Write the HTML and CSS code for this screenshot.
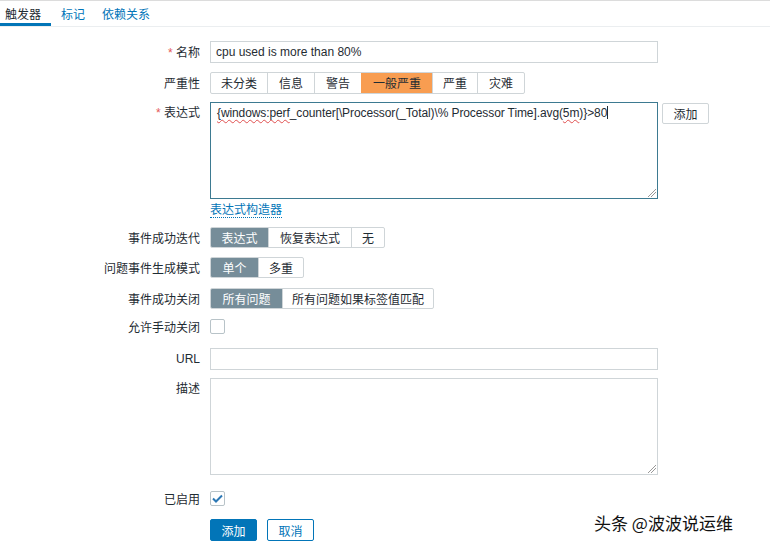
FILE: index.html
```html
<!DOCTYPE html>
<html>
<head>
<meta charset="utf-8">
<link rel="stylesheet" href="styles.css">
</head>
<body>
<div class="page">
  <div class="tabs">
    <span class="tab active">触发器</span>
    <span class="tab">标记</span>
    <span class="tab">依赖关系</span>
  </div>
  <div class="form">
    <div class="row r-name">
      <label class="lbl"><span class="req">*</span> 名称</label>
      <div class="input wide">cpu used is more than 80%</div>
    </div>
    <div class="row r-sev">
      <label class="lbl">严重性</label>
      <div class="seg">
        <span class="opt w57">未分类</span>
        <span class="opt w47">信息</span>
        <span class="opt w47">警告</span>
        <span class="opt w71 orange">一般严重</span>
        <span class="opt w45">严重</span>
        <span class="opt w47">灾难</span>
      </div>
    </div>
    <div class="row r-expr top">
      <label class="lbl lbl-top"><span class="req">*</span> 表达式</label>
      <div class="textarea wide focus"><span class="sp">{windows:perf</span>_counter[\Processor(_Total)\% Processor Time].avg(<span class="sp">5m</span>)}&gt;80<span class="caret"></span><span class="grip"></span></div>
      <span class="btn small">添加</span>
    </div>
    <div class="row r-link">
      <span class="lbl"></span>
      <a class="link">表达式构造器</a>
    </div>
    <div class="row r-it">
      <label class="lbl">事件成功迭代</label>
      <div class="seg">
        <span class="opt w58 sel">表达式</span>
        <span class="opt w83">恢复表达式</span>
        <span class="opt w33">无</span>
      </div>
    </div>
    <div class="row r-mode">
      <label class="lbl">问题事件生成模式</label>
      <div class="seg">
        <span class="opt w47 sel">单个</span>
        <span class="opt w45">多重</span>
      </div>
    </div>
    <div class="row r-close">
      <label class="lbl">事件成功关闭</label>
      <div class="seg">
        <span class="opt w71 sel">所有问题</span>
        <span class="opt w152">所有问题如果标签值匹配</span>
      </div>
    </div>
    <div class="row r-man">
      <label class="lbl">允许手动关闭</label>
      <span class="check"></span>
    </div>
    <div class="row r-url">
      <label class="lbl">URL</label>
      <div class="input wide url"></div>
    </div>
    <div class="row r-desc top">
      <label class="lbl lbl-top">描述</label>
      <div class="textarea wide desc"><span class="grip"></span></div>
    </div>
    <div class="row r-en">
      <label class="lbl">已启用</label>
      <span class="check on">
        <svg width="11" height="9" viewBox="0 0 11 9"><path d="M1 4.5 L4 7.5 L10 1.5" fill="none" stroke="#2c78b5" stroke-width="2"/></svg>
      </span>
    </div>
    <div class="row r-btns">
      <span class="lbl"></span>
      <span class="btn primary">添加</span>
      <span class="btn cancel">取消</span>
    </div>
  </div>
  <div class="watermark">头条 @波波说运维</div>
</div>
</body>
</html>
```

FILE: styles.css
```css
html, body {
  margin: 0;
  padding: 0;
  background: #ffffff;
}
body {
  font-family: "Liberation Sans", "Noto Sans CJK SC", Arial, sans-serif;
  font-size: 12px;
  color: #1f2c33;
}
.page {
  position: relative;
  width: 770px;
  height: 549px;
  overflow: hidden;
  border-top: 1px solid #dcdcdc;
  box-sizing: border-box;
}
.tabs {
  display: flex;
  height: 26px;
  border-bottom: 1px solid #ebeef0;
  box-sizing: border-box;
}
.tab {
  display: flex;
  align-items: center;
  padding: 0 9px 0 6px;
  color: #0275b8;
  font-size: 12px;
}
.tab:nth-child(2) { padding: 0 9px 0 10px; }
.tab:nth-child(3) { padding: 0 9px 0 8px; }
.tab.active {
  color: #1f2c33;
  width: 51px;
  box-sizing: border-box;
  padding-left: 5px;
  border-bottom: 3px solid #0275b8;
  padding-top: 3px;
}
.form {
  display: flex;
  flex-direction: column;
  padding-top: 13px;
}
.row {
  display: flex;
  align-items: center;
}
.row.top { align-items: flex-start; }
.lbl {
  width: 200px;
  padding-right: 10px;
  text-align: right;
  flex-shrink: 0;
  color: #1f2c33;
}
.lbl-top { padding-top: 1px; }
.req { color: #e45959; }
.input {
  height: 22px;
  border: 1px solid #cfd5d8;
  box-sizing: border-box;
  padding: 0 5px;
  display: flex;
  align-items: center;
  font-size: 12px;
  color: #1f2c33;
}
.wide { width: 448px; }
.r-name { height: 23px; }
.r-sev { margin-top: 8px; height: 23px; }
.seg {
  display: flex;
  height: 22px;
  border: 1px solid #cfd5d8;
  box-sizing: border-box;
  border-radius: 2px;
  overflow: hidden;
}
.r-it .seg, .r-mode .seg, .r-close .seg { height: 21px; }
.opt {
  display: flex;
  align-items: center;
  justify-content: center;
  border-left: 1px solid #cfd5d8;
  box-sizing: border-box;
  color: #1f2c33;
}
.opt:first-child { border-left: none; }
.opt.orange { background: #f89d51; border-color: #f89d51; }
.opt.orange + .opt { border-left-color: #cfd5d8; }
.opt.sel { background: #768d99; color: #ffffff; border-color: #768d99; }
.w33 { width: 33px; }
.w45 { width: 45px; }
.w47 { width: 47px; }
.w57 { width: 56px; }
.w58 { width: 57px; }
.w71 { width: 71px; }
.w83 { width: 83px; }
.w152 { width: 151px; }
.r-expr { margin-top: 8px; }
.textarea {
  position: relative;
  height: 97px;
  border: 1px solid #cfd5d8;
  box-sizing: border-box;
  padding: 3px 6px;
  line-height: 14px;
  font-size: 12px;
  letter-spacing: -0.1px;
  color: #1f2c33;
  white-space: nowrap;
}
.textarea.focus { border-color: #3d7a91; }
.sp {
  text-decoration: underline wavy #e05050;
  text-decoration-thickness: 1px;
  text-underline-offset: 2px;
}
.caret {
  display: inline-block;
  width: 1px;
  height: 13px;
  background: #1f2c33;
  vertical-align: -2px;
}
.grip {
  position: absolute;
  right: 1px;
  bottom: 1px;
  width: 8px;
  height: 8px;
  background: linear-gradient(135deg, transparent 0 45%, #999 45% 52%, transparent 52% 68%, #999 68% 75%, transparent 75%);
}
.btn {
  display: flex;
  align-items: center;
  justify-content: center;
  height: 21px;
  box-sizing: border-box;
  border-radius: 2px;
  font-size: 12px;
}
.btn.small {
  width: 47px;
  margin-left: 4px;
  margin-top: 1px;
  border: 1px solid #cfd5d8;
  color: #1f2c33;
  background: #ffffff;
}
.r-link { margin-top: 5px; height: 14px; }
.link {
  color: #0275b8;
  border-bottom: 1px dotted #0275b8;
  line-height: 13px;
}
.r-it { margin-top: 9px; height: 21px; }
.r-mode { margin-top: 9px; height: 21px; }
.r-close { margin-top: 10px; height: 21px; }
.r-man { margin-top: 9px; height: 16px; }
.check {
  width: 15px;
  height: 15px;
  border: 1px solid #b8c3c8;
  border-radius: 2px;
  box-sizing: border-box;
  display: flex;
  align-items: center;
  justify-content: center;
  background: #fff;
}
.r-url { margin-top: 14px; height: 22px; }
.url { height: 22px; }
.r-desc { margin-top: 8px; }
.desc { height: 97px; }
.r-en { margin-top: 15px; height: 16px; }
.r-btns { margin-top: 13px; height: 22px; }
.btn.primary {
  width: 47px;
  height: 22px;
  background: #0275b8;
  color: #ffffff;
  border: 1px solid #0275b8;
}
.btn.cancel {
  width: 47px;
  height: 22px;
  margin-left: 10px;
  background: #ffffff;
  color: #0275b8;
  border: 1px solid #0275b8;
}
.watermark {
  position: absolute;
  left: 594px;
  top: 509px;
  font-family: "Noto Sans CJK SC", sans-serif;
  font-size: 17px;
  color: #111;
  text-shadow: 1px 1px 0 #fff, -1px -1px 0 #fff;
}
```
